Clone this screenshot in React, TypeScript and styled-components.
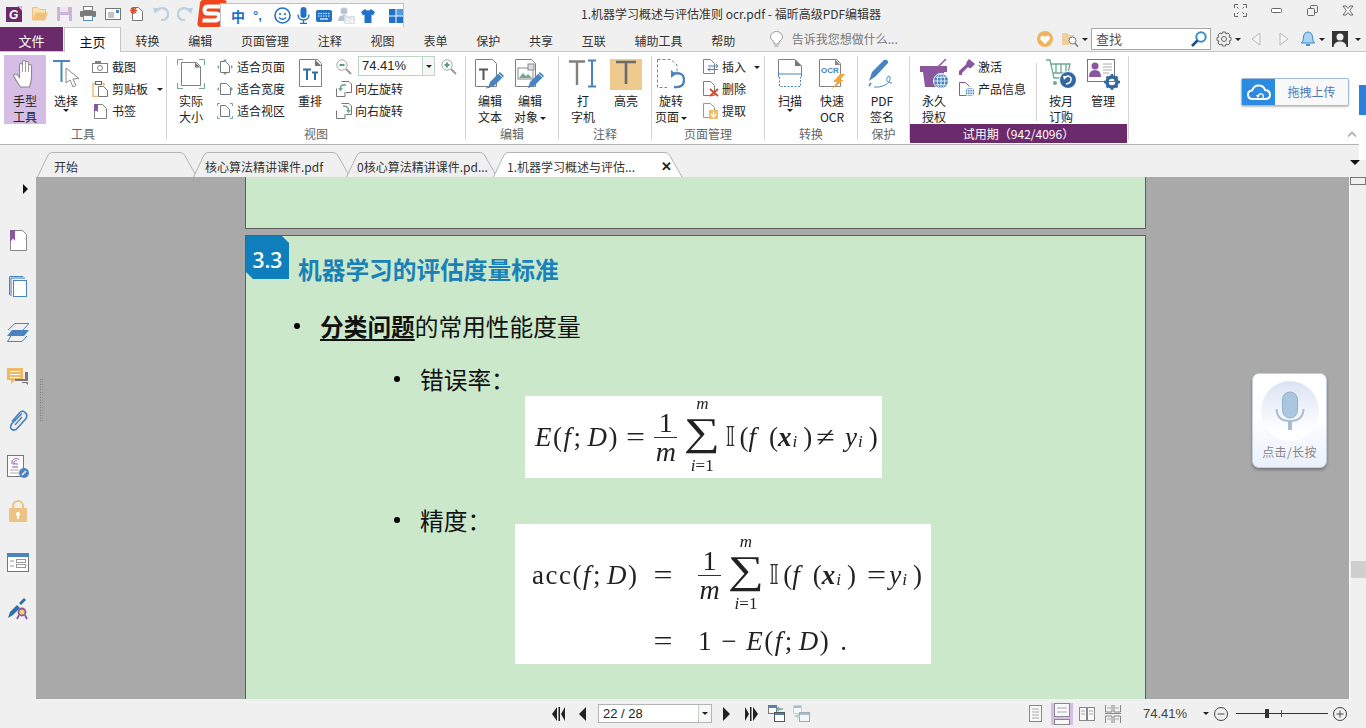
import React from 'react';
import styled, { createGlobalStyle } from 'styled-components';

const Global = createGlobalStyle`
  html, body { margin: 0; padding: 0; background: #f0f0f0; }
  * { box-sizing: border-box; }
`;
const CJK = `"Noto Sans CJK SC", "Liberation Sans", sans-serif`;
const Root = styled.div`
  position: relative; width: 1366px; height: 728px; overflow: hidden;
  background: #f0f0f0; font: 12px/16px ${CJK}; color: #222;
`;
const Ico = styled.svg`display: block; flex-shrink: 0;`;
const I = ({ w, h, children }: { w: number; h: number; children?: React.ReactNode }) => (
  <Ico width={w} height={h} viewBox={`0 0 ${w} ${h}`} fill="none">{children}</Ico>
);
const Caret = styled.span<{ $ml?: number; $c?: string }>`
  display: inline-block; flex-shrink: 0; width: 0; height: 0; vertical-align: middle;
  margin-left: ${p => p.$ml ?? 0}px;
  border-left: 3px solid transparent; border-right: 3px solid transparent;
  border-top: 3px solid ${p => p.$c ?? '#222'};
`;

/* ---------- title bar ---------- */
const TitleBar = styled.div`display: flex; align-items: center; height: 27px; padding: 0 12px 0 6px;`;
const Quick = styled.div`display: flex; align-items: center; gap: 8.5px;`;
const LogoSlot = styled.div`width: 17.5px; flex-shrink: 0;`;
const SogouWrap = styled.div`display: flex; align-items: flex-start; height: 27px; margin-left: 4px;`;
const SogouBar = styled.div`
  display: flex; align-items: center; width: 184px; height: 24px; margin: 3px 0 0 -7px; padding-left: 10px;
  background: #fff; border: 1px solid #b9c3cf; border-bottom: 0;
`;
const SogouZh = styled.span`font: 700 14px/16px ${CJK}; color: #1f72c7; width: 22px;`;
const SogouPunct = styled.span`font: 700 13px/14px "Liberation Sans", sans-serif; color: #1f72c7; width: 21px;`;
const SogouItems = styled.div`display: flex; align-items: center; gap: 6px;`;
const Title = styled.div`margin-left: 177px; white-space: nowrap; color: #333;`;
const WinButtons = styled.div`display: flex; align-items: center; gap: 24.5px; margin-left: auto; margin-top: -6px;`;

/* ---------- menu ---------- */
const MenuBar = styled.div`display: flex; height: 24px; position: relative;`;
const FileTab = styled.div`
  width: 63px; height: 24px; background: #6b2a6b; color: #fff; text-align: center; line-height: 27px; font-size: 13px;
`;
const MenuTab = styled.div<{ $active?: boolean }>`
  height: ${p => (p.$active ? 25 : 24)}px; line-height: 27px; padding: 0 14.4px; white-space: nowrap; color: #333;
  ${p => p.$active && `
    width: 57px; margin-left: 1px; padding: 0; text-align: center; font-size: 13px; color: #111; background: #fff;
    border: 1px solid #c4c4c4; border-bottom: 0; position: relative; z-index: 2;
  `}
`;
const Hint = styled.div`display: flex; align-items: center; gap: 9px; margin-left: 20px; color: #777; height: 24px;`;
const RightTools = styled.div`display: flex; align-items: center; margin-left: auto; padding-right: 5px; height: 24px;`;
const SearchBox = styled.div`
  display: flex; align-items: center; justify-content: space-between; width: 120px; height: 22px; margin-left: 3px; padding: 0 2px 0 4px;
  background: #fff; border: 1px solid #a8a8a8; font-size: 13px; color: #555;
`;
const Spacer = styled.span<{ $w: number }>`display: block; flex-shrink: 0; width: ${p => p.$w}px;`;

/* ---------- ribbon ---------- */
const Ribbon = styled.div`
  display: flex; height: 94px; background: #fff; border-top: 1px solid #c8c8c8; border-bottom: 1px solid #b4b4b4; position: relative;
`;
const Group = styled.div<{ $w: number; $pl?: number }>`
  width: ${p => p.$w}px; height: 84px; margin-top: 4px; padding-left: ${p => p.$pl ?? 0}px;
  border-right: 1px solid #d4d4d4; flex-shrink: 0; position: relative;
`;
const Body = styled.div`display: flex; height: 68px; align-items: flex-start;`;
const GroupLabel = styled.div`
  position: absolute; left: 0; right: 0; top: 68px; height: 16px; line-height: 20px; text-align: center; color: #666;
`;
const BigBtn = styled.div<{ $w?: number; $ml?: number; $active?: boolean }>`
  display: flex; flex-direction: column; align-items: center; flex-shrink: 0;
  width: ${p => p.$w ?? 40}px; height: 69px; margin-top: -1px; margin-left: ${p => p.$ml ?? 0}px; padding-top: 4px;
  background: ${p => (p.$active ? '#d5bde6' : 'transparent')}; white-space: nowrap;
`;
const IconSlot = styled.div`
  display: flex; justify-content: center; align-items: flex-start; height: 34px; width: 100%; flex-shrink: 0;
`;
const HiSlot = styled.div`
  display: flex; justify-content: center; width: 32px; height: 31px; margin-bottom: 3px; background: #eeca8e; flex-shrink: 0;
`;
const SmallCol = styled.div<{ $ml?: number }>`display: flex; flex-direction: column; margin-left: ${p => p.$ml ?? 0}px; flex-shrink: 0;`;
const SmallRow = styled.div<{ $gap?: number }>`
  display: flex; align-items: center; height: 22px; gap: ${p => p.$gap ?? 3}px; white-space: nowrap; color: #222;
`;
const BookSlot = styled.div`width: 16px; padding-left: 2px; flex-shrink: 0;`;
const ZoomInput = styled.div`
  display: flex; align-items: center; justify-content: space-between; width: 77px; height: 20px; margin-top: -2px;
  background: #fff; border: 1px solid #bcd6c6; border-right: 0; padding-left: 3px; font: 13px/18px "Liberation Sans", sans-serif; color: #222;
`;
const ZoomDrop = styled.span`
  display: flex; align-items: center; justify-content: center; width: 13px; height: 18px; border-left: 1px solid #bcd6c6; border-right: 1px solid #bcd6c6; background: #f6f6f6;
`;
const InnerSep = styled.div`width: 1px; height: 58px; margin: 7px 0 0 10px; background: #d4d4d4; flex-shrink: 0;`;
const TrialBar = styled.div`
  position: absolute; left: 0; top: 68px; width: 217px; height: 19px; background: #6b2a6b; color: #fff; text-align: center; line-height: 19px;
`;
const UploadArea = styled.div`flex: 1; padding: 26px 0 0 112px;`;
const UploadBtn = styled.div`
  display: flex; width: 108px; height: 28px; background: #f8f8f8; border: 1px solid #a3bedc; border-radius: 2px; box-shadow: 0 1px 2px rgba(0,0,0,.25);
`;
const UploadIcon = styled.div`display: flex; align-items: center; justify-content: center; width: 33px; background: #2b8be0;`;
const UploadText = styled.div`flex: 1; text-align: center; line-height: 26px; color: #4d78b8;`;
const Collapse = styled.div`position: absolute; left: 1347px; top: 79px;`;
const SidePanel = styled.div`
  position: absolute; left: 1359px; top: 85px; width: 7px; height: 75px; background: #fff; z-index: 3;
  &::before { content: ''; display: block; height: 30px; background: #2b7fdc; }
`;

/* ---------- doc tabs ---------- */
const TabsRow = styled.div`display: flex; align-items: flex-end; height: 32px; padding-left: 37px;`;
const DocTab = styled.div<{ $w: number; $active?: boolean }>`
  position: relative; width: ${p => p.$w}px; height: 25px; margin-right: -7px; flex-shrink: 0; z-index: ${p => (p.$active ? 2 : 1)};
`;
const TabShape = styled.svg`position: absolute; inset: 0;`;
const TabText = styled.div<{ $pl: number }>`
  position: relative; padding-left: ${p => p.$pl}px; line-height: 30px; white-space: nowrap; color: #333;
`;
const TabClose = styled.span`position: absolute; right: 13px; top: 7px; font: 700 13px/16px "Liberation Sans", sans-serif; color: #222;`;
const TabsEnd = styled.div`margin-left: auto; margin-right: 6px; margin-bottom: 12px;`;
const BigCaret = styled.span`
  display: block; width: 0; height: 0; border-left: 5px solid transparent; border-right: 5px solid transparent; border-top: 5px solid #111;
`;

/* ---------- main ---------- */
const Main = styled.div`display: flex; height: 522px;`;
const Sidebar = styled.div`display: flex; flex-direction: column; align-items: center; width: 36px; flex-shrink: 0; position: relative;`;
const SideToggle = styled.span`
  position: absolute; left: 23px; top: 7px; width: 0; height: 0;
  border-top: 5px solid transparent; border-bottom: 5px solid transparent; border-left: 5px solid #111;
`;
const SideItem = styled.div<{ $mt: number }>`margin-top: ${p => p.$mt}px;`;
const Canvas = styled.div`
  position: relative; width: 1313px; flex-shrink: 0; overflow: hidden; background: #a9a9a9; padding-left: 209px;
`;
const Gripper = styled.div`
  position: absolute; left: 3px; top: 201px; width: 4px; height: 44px;
  background-image: radial-gradient(#666 0.7px, transparent 0.8px); background-size: 2.6px 2.6px;
`;
const PageTop = styled.div`
  width: 901px; height: 52px; background: #cbe8cb; border: 1px solid #5d5d5d; border-top: 0;
`;
const Page = styled.div`
  width: 901px; height: 520px; margin-top: 6px; background: #cbe8cb; border: 1px solid #5d5d5d; border-bottom: 0;
  display: flex; flex-direction: column; color: #111;
`;
const PageHead = styled.div`display: flex; align-items: flex-start; height: 47px;`;
const Badge = styled.div`
  width: 43px; height: 43px; background: #0e7fbc; color: #fff; text-align: center;
  font: 600 21px/49px "Open Sans", "Liberation Sans", sans-serif;
  clip-path: polygon(0 0, 36px 0, 43px 7px, 43px 43px, 7px 43px, 0 36px);
`;
const Heading = styled.div`margin: 18px 0 0 9px; font: 700 23.7px/30px ${CJK}; color: #1a80b8;`;
const Bullet = styled.div<{ $indent: number; $mt: number }>`
  display: flex; align-items: center; height: 30px; padding-left: ${p => p.$indent}px; margin-top: ${p => p.$mt}px;
  font: 23.7px/30px ${CJK}; color: #111; white-space: nowrap;
`;
const Dot = styled.span`width: 6px; height: 6px; border-radius: 50%; background: #000; margin-right: 20px; flex-shrink: 0;`;
const Strong = styled.span`font-weight: 700; text-decoration: underline; text-underline-offset: 3px;`;
const Formula = styled.div<{ $ml: number; $mt: number; $w: number; $h: number }>`
  position: relative; width: ${p => p.$w}px; height: ${p => p.$h}px; margin-left: ${p => p.$ml}px; margin-top: ${p => p.$mt}px;
  background: #fff; flex-shrink: 0; color: #222; font: italic 27px/30px "Liberation Serif", serif;
`;
const MathLine = styled.div<{ $pl?: number }>`
  display: flex; align-items: center; height: 100%; padding-left: ${p => p.$pl ?? 0}px; white-space: nowrap; filter: blur(.3px);
`;
const MathGrid = styled.div`
  display: grid; grid-template-columns: 123px 43px auto; grid-template-rows: 98px 34px; align-items: center; padding: 2px 0 0 17px;
  filter: blur(.3px);
`;
const Spread = styled.span`letter-spacing: 1.5px; white-space: nowrap;`;
const Up = styled.span`font-style: normal;`;
const BoldX = styled.b`font-style: italic; font-weight: 700;`;
const Sub = styled.span`font-size: 17px; line-height: 0; margin: 9px 6px 0 1px;`;
const Sym = styled.span<{ $m?: string }>`font-style: normal; margin: ${p => p.$m ?? '0'};`;
const Wide = styled.span`font-style: normal; display: inline-block; transform: scaleX(1.25); margin: 0 3px;`;
const Frac = styled.span`
  display: inline-flex; flex-direction: column; align-items: center; width: 23px; line-height: 27px; font-size: 28px;
  & > :first-child { font-style: normal; border-bottom: 1px solid #333; width: 100%; text-align: center; padding-bottom: 1px; }
`;
const Sum = styled.span`display: inline-flex; flex-direction: column; align-items: center; width: 34px; margin: -4px 6px 0 8px;`;
const SumLimit = styled.span`font-size: 17px; line-height: 14px;`;
const SumSign = styled.span`
  display: block; height: 48px; font: 39px/48px "Liberation Serif", serif; font-style: normal;
  transform: translateY(-3px) scaleX(1.3);
`;
const DoubleI = styled.span`font: 26px/28px "DejaVu Sans", sans-serif; font-style: normal; margin-right: 4px; color: #333;`;

const Scroll = styled.div`width: 17px; flex-shrink: 0; display: flex; flex-direction: column; align-items: center; border-left: 1px solid #fafafa;`;
const ScrollUp = styled.div`width: 16px; height: 8px; border: 1px solid #777; background: #f0f0f0;`;
const ScrollThumb = styled.div`width: 15px; height: 17px; margin-top: 376px; background: #cfcfcf;`;
const Voice = styled.div`
  position: absolute; left: 1216px; top: 196px; width: 75px; height: 95px; border-radius: 7px; border: 1px solid #c4cfe0;
  background: linear-gradient(#fff 0%, #fff 45%, #eaf0fb 100%); box-shadow: 0 2px 3px rgba(0,0,0,.3);
  display: flex; flex-direction: column; align-items: center; padding-top: 7px;
`;
const VoiceCircle = styled.div`
  display: flex; align-items: center; justify-content: center; width: 58px; height: 60px; border-radius: 50%;
  background: linear-gradient(#dbe4f4, #ffffff 85%);
`;
const VoiceText = styled.div`margin-top: 3px; font-size: 12px; letter-spacing: .4px; color: #888; white-space: nowrap;`;

/* ---------- status ---------- */
const Status = styled.div`display: flex; align-items: center; height: 29px; padding: 0 19px 0 552px;`;
const PageBox = styled.div`
  display: flex; align-items: center; justify-content: space-between; width: 114px; height: 19px; margin: 0 9px 0 10px;
  background: #fff; border: 1px solid #b4b4b4; padding-left: 4px; font: 13px/17px "Liberation Sans", sans-serif; color: #222;
`;
const PageDrop = styled.span`display: flex; align-items: center; justify-content: center; width: 13px; height: 17px; border-left: 1px solid #bcd6c6; background: #f6f6f6;`;
const StatusRight = styled.div`display: flex; align-items: center; margin-left: auto;`;
const ViewBtn = styled.div<{ $on?: boolean; $ml?: number; $w?: number }>`
  display: flex; align-items: center; justify-content: center; width: ${p => p.$w ?? 22}px; height: 22px; margin-left: ${p => p.$ml ?? 0}px;
  background: ${p => (p.$on ? '#d5bde6' : 'transparent')};
`;
const ZoomPct = styled.span`margin-left: 19px; width: 60px; font: 13px/16px "Liberation Sans", sans-serif; color: #444;`;
const Slider = styled.div`position: relative; width: 92px; height: 1px; margin: 0 5px 0 8px; background: #333;`;
const SliderThumb = styled.span`position: absolute; left: 29px; top: -4px; width: 4px; height: 9px; background: #333;`;
const SliderTick = styled.span`position: absolute; left: 45px; top: -3px; width: 1px; height: 7px; background: #555;`;

/* ---------- icons ---------- */
const B = '#4a83bd', G = '#808080', P = '#8a569e', O = '#eeb96b', T = '#6fa896';
const Doc = ({ x = 0, y = 0, w = 13, h = 15, s = G, f = '#fff' }: any) => (
  <path d={`M${x + .5} ${y + .5}H${x + w - 4.5}L${x + w - .5} ${y + 4.5}V${y + h - .5}H${x + .5}Z`} fill={f} stroke={s} />
);
const Pen = ({ x = 0, y = 0, c = B }: any) => (
  <g transform={`translate(${x} ${y})`}>
    <path d="M0 16 L2 10 L12 0 L16 4 L6 14 Z" fill={c} /><path d="M10.5 1.5 L14.5 5.5" stroke="#fff" />
  </g>
);
const Globe = ({ cx, cy, r, c = B }: any) => (
  <g>
    <circle cx={cx} cy={cy} r={r} fill={c} stroke="#fff" />
    <path d={`M${cx - r} ${cy}H${cx + r}M${cx} ${cy - r}V${cy + r}M${cx - r * .7} ${cy - r * .5}H${cx + r * .7}M${cx - r * .7} ${cy + r * .5}H${cx + r * .7}`} stroke="#fff" strokeWidth=".8" />
    <ellipse cx={cx} cy={cy} rx={r * .5} ry={r} stroke="#fff" strokeWidth=".8" />
  </g>
);
const LogoIcon = () => (
  <I w={16} h={16}>
    <rect y="1" width="16" height="15" fill="#6b2a6b" /><path d="M12 0h3l1 2v3z" fill="#fff" stroke="#6b2a6b" strokeWidth=".5" />
    <text x="3" y="13" fontFamily="Liberation Sans" fontWeight="700" fontStyle="italic" fontSize="12" fill="#fff">G</text>
  </I>
);
const OpenIcon = () => (
  <I w={16} h={15}>
    <path d="M.5 14V1.5h5l2 2h6V7" fill="#f8e2b8" stroke="#ecc07e" />
    <path d="M.5 14.5L3.5 6.5H16L13 14.5Z" fill="#f0c27b" />
  </I>
);
const SaveIcon = () => (
  <I w={15} h={14}>
    <rect width="15" height="14" fill="#ccb4d6" /><rect x="3" width="8" height="5" fill="#ede4f1" />
    <rect x="3" y="8" width="9" height="6" fill="#f3edf5" />
  </I>
);
const PrintIcon = () => (
  <I w={16} h={15}>
    <rect x="3.5" y=".5" width="9" height="4" fill="#fff" stroke={G} /><rect y="5" width="16" height="6" rx="1" fill="#7a7a7a" />
    <rect x="3.5" y="9.5" width="9" height="5" fill="#fff" stroke="#5a8fc0" />
  </I>
);
const MailIcon = () => (
  <I w={16} h={12}>
    <rect x=".5" y=".5" width="15" height="11" fill="#fff" stroke="#777" />
    <path d="M3 5h6M3 7h6M3 9h6" stroke="#888" /><rect x="11" y="2" width="3" height="3" fill="#4a83bd" />
  </I>
);
const NewIcon = () => (
  <I w={15} h={15}>
    <Doc x={3} y={1} w={11} h={14} s="#777" />
    <path d="M4.5 1V8M1 4.5H8M2 2l5 5M7 2l-5 5" stroke="#e5492a" strokeWidth="1.3" />
  </I>
);
const UndoIcon = ({ flip }: { flip?: boolean }) => (
  <I w={16} h={15}>
    <g transform={flip ? 'translate(16 0) scale(-1 1)' : undefined}>
      <path d="M4 5 A6 6 0 1 1 8 14" stroke="#bcd0e0" strokeWidth="2.4" />
      <path d="M0 2 L7 2 L2 8Z" fill="#bcd0e0" />
    </g>
  </I>
);
const SogouS = () => (
  <I w={30} h={27}>
    <path d="M6 0H27Q30 0 29.5 3L25 24Q24.500 27 21 27H4Q0 27 0.500 23L3 3Q3.500 0 6 0Z" fill="#f0461e" />
    <path d="M23 6.500H11Q7.500 6.500 7.500 10 Q7.500 13.500 11 13.500H19Q22.500 13.500 22 17 Q21.500 20.500 18 20.500H5.500" stroke="#fff" strokeWidth="4" />
  </I>
);
const SgSmile = () => (
  <I w={17} h={17}>
    <circle cx="8.500" cy="8.500" r="7.500" stroke="#1f72c7" strokeWidth="1.600" />
    <circle cx="6" cy="7" r="1.100" fill="#1f72c7" /><circle cx="11" cy="7" r="1.100" fill="#1f72c7" />
    <path d="M5 10.500Q8.500 14 12 10.500" stroke="#1f72c7" strokeWidth="1.300" />
  </I>
);
const SgMic = () => (
  <I w={13} h={17}>
    <rect x="3.500" width="6" height="11" rx="3" fill="#1f72c7" />
    <path d="M1 7.500Q1 13 6.500 13T12 7.500M6.500 13V16M3 16.500H10" stroke="#1f72c7" strokeWidth="1.300" />
  </I>
);
const SgKeys = () => (
  <I w={16} h={12}>
    <rect width="16" height="12" rx="2" fill="#1f72c7" />
    <path d="M2 3.500H14M2 6H14" stroke="#fff" strokeDasharray="1.500 1" /><path d="M4 9H12" stroke="#fff" strokeWidth="1.200" />
  </I>
);
const SgUser = () => (
  <I w={17} h={17}>
    <circle cx="6" cy="4" r="3.500" fill="#b7c6d2" /><path d="M0 14Q0 8 6 8T12 14Z" fill="#b7c6d2" />
    <rect x="6" y="9" width="11" height="8" rx="1" fill="#dbe2e8" />
    <text x="7.500" y="16" fontFamily="Liberation Sans" fontSize="7" fontWeight="700" fill="#fff">24</text>
  </I>
);
const SgShirt = () => (
  <I w={14} h={14}><path d="M4 0L0 3L2 6.500L3.500 5.500V14H10.500V5.500L12 6.500L14 3L10 0Q7 3 4 0Z" fill="#1f72c7" /></I>
);
const SgGrid = () => (
  <I w={14} h={14}>
    <rect width="6.500" height="6.500" fill="#1f72c7" /><rect x="7.500" width="6.500" height="6.500" fill="#4f9ae0" />
    <rect y="7.500" width="6.500" height="6.500" fill="#1f72c7" /><rect x="7.500" y="7.500" width="6.500" height="6.500" fill="#1f72c7" />
  </I>
);
const WinFull = () => (
  <I w={13} h={13}><path d="M.5 4V.5H4M9 .5H12.500V4M12.500 9V12.500H9M4 12.500H.5V9M3 3l1.500 1.500M10 3L8.500 4.500M10 10L8.500 8.500M3 10l1.500-1.500" stroke="#666" /></I>
);
const WinMin = () => (<I w={11} h={13}><rect x=".5" y="4.500" width="10" height="4" rx="1" fill="#fff" stroke="#666" /></I>);
const WinMax = () => (
  <I w={11} h={13}><rect x="3.500" y="1.500" width="7" height="7" rx="1" stroke="#666" /><rect x=".5" y="4.500" width="7" height="7" rx="1" fill="#f0f0f0" stroke="#666" /></I>
);
const WinClose = () => (
  <I w={12} h={13}><path d="M1 2H4L6 4.500L8 2H11L7.700 6.500L11 11H8L6 8.500L4 11H1L4.300 6.500Z" fill="#fff" stroke="#666" /></I>
);
const Bulb = () => (
  <I w={13} h={16}>
    <path d="M4 11Q.5 8.500.5 6A6 5.500 0 0 1 12.500 6Q12.500 8.500 9 11V13H4Z" stroke="#999" fill="#fff" /><path d="M4.500 15H8.500" stroke="#999" />
  </I>
);
const Heart = () => (
  <I w={16} h={16}>
    <circle cx="8" cy="8" r="8" fill="#eeb45e" />
    <path d="M8 13L3.500 8.500Q2.500 5.500 5 4.800Q7 4.500 8 6.200Q9 4.500 11 4.800Q13.500 5.500 12.500 8.500Z" fill="#fff" />
  </I>
);
const FolderFind = () => (
  <I w={17} h={16}>
    <path d="M0 14V2H5L7 4H12V7H7V14Z" fill="#f0cf9e" />
    <circle cx="10.500" cy="9.500" r="3.500" stroke="#777" fill="#fff" /><path d="M13 12.500L16 15.500" stroke="#777" strokeWidth="1.600" />
  </I>
);
const SearchGlass = () => (
  <I w={18} h={17}>
    <circle cx="11" cy="6" r="4.700" stroke="#3a8fc8" strokeWidth="2" fill="#fff" /><path d="M7.500 9.500L2 15" stroke="#1f4f86" strokeWidth="2.600" />
  </I>
);
const Gear = () => (
  <I w={16} h={16}>
    <circle cx="8" cy="8" r="2.500" stroke="#666" />
    <path d="M6.500 1H9.500L10 3L12 2L14 4L13 6L15 6.500V9.500L13 10L14 12L12 14L10 13L9.500 15H6.500L6 13L4 14L2 12L3 10L1 9.500V6.500L3 6L2 4L4 2L6 3Z" stroke="#666" />
  </I>
);
const NavTri = ({ flip }: { flip?: boolean }) => (
  <I w={10} h={14}><path d={flip ? 'M1 1L9 7L1 13Z' : 'M9 1L1 7L9 13Z'} stroke="#bbb" fill="#f4f4f4" /></I>
);
const Bell = () => (
  <I w={14} h={16}>
    <path d="M.5 12Q2.500 10.500 2.500 6A4.500 5 0 0 1 11.500 6Q11.500 10.500 13.500 12Z" fill="#a9d4f5" stroke="#3b87c8" />
    <path d="M5 14H9" stroke="#3b87c8" strokeWidth="1.800" />
  </I>
);
const Avatar = () => (
  <I w={16} h={16}>
    <rect width="16" height="16" fill="#333" /><circle cx="8" cy="6" r="3.500" fill="#eee" /><path d="M1.500 16Q2 10.500 8 10.500T14.500 16Z" fill="#eee" />
  </I>
);
const HandIcon = () => (
  <I w={24} h={29}>
    <path d="M7.500 28C5 24 2.500 21 1 17.500C.2 15.500 2.500 14 4.500 16L6.500 18.500V6C6.500 4 9.500 4 9.500 6V3C9.500 1 12.500 1 12.500 3V3.500C12.500 2 15.500 2 15.500 4V6.500C15.500 5 18.500 5 18.500 7V18C18.500 22 17.500 25 16.500 28Z" fill="#fff" stroke="#8a8a8a" strokeWidth="1.100" />
    <path d="M9.500 6V13M12.500 3V13M15.500 4V13" stroke="#9a9a9a" />
  </I>
);
const SelectIcon = () => (
  <I w={27} h={29}>
    <path d="M0 2H17M8.500 2V23" stroke={B} strokeWidth="2" />
    <path d="M13 9V24L17 21L20 28L23 26.500L20 20L26 19.500Z" fill="#fff" stroke="#8a8a8a" />
  </I>
);
const CamIcon = () => (
  <I w={16} h={12}><rect x=".5" y="2.500" width="15" height="9" fill="#fff" stroke={G} /><rect x="3" y="0" width="6" height="3" fill={G} /><circle cx="8" cy="7" r="2.500" stroke={G} /></I>
);
const ClipIcon = () => (
  <I w={16} h={16}>
    <path d="M4.500 2.500H1V15.500H6" stroke={O} strokeWidth="1.400" /><path d="M9 2.500H12V5" stroke={O} strokeWidth="1.400" />
    <rect x="3.500" y=".5" width="6" height="3" stroke="#666" /><Doc x={6} y={5} w={10} h={11} s="#777" />
  </I>
);
const BookIcon = () => (
  <I w={13} h={15}><Doc s={G} /><path d="M0 0H4V8L2 6.500L0 8Z" fill={P} /></I>
);
const ActualIcon = () => (
  <I w={28} h={30}>
    <path d="M.5 6V.5H6M22 .5H27.500V6M27.500 24V29.500H22M6 29.500H.5V24" stroke={T} />
    <Doc x={4} y={3} w={20} h={24} s={G} f="#fff" />
    <path d="M18 3.500L23.500 8.500H18Z" fill="#777" />
  </I>
);
const FitPage = () => (
  <I w={16} h={16}>
    <Doc x={3} y={2} w={10} h={12} s="#777" />
    <path d="M8 0L6 2H10ZM8 16L6 14H10ZM0 8L2 6V10ZM16 8L14 6V10Z" fill={T} />
  </I>
);
const FitWidth = () => (
  <I w={16} h={14}><Doc x={3} y={1} w={11} h={12} s="#777" /><path d="M0 7L2 5V9ZM16 7L14 5V9Z" fill={T} /></I>
);
const FitView = () => (
  <I w={16} h={16}>
    <Doc x={3} y={2} w={10} h={12} s="#777" />
    <path d="M.5 3V.5H3M13 .5H15.500V3M15.500 13V15.500H13M3 15.500H.5V13" stroke={T} />
  </I>
);
const ReflowIcon = () => (
  <I w={23} h={28}>
    <Doc w={23} h={28} s={G} /><path d="M16 .5L22.500 7H16Z" fill="#777" />
    <path d="M4 10.500H12M8 10.500V21M13 13.500H19M16 13.500V21" stroke="#2f6ea6" strokeWidth="2" />
  </I>
);
const ZoomOut = () => (
  <I w={16} h={16}><circle cx="6" cy="6" r="5.200" fill="#fff" stroke="#aaa" /><path d="M3.500 6H8.500" stroke="#5b9a84" strokeWidth="2" /><path d="M10 10L15 15" stroke="#999" strokeWidth="2" /></I>
);
const ZoomIn = () => (
  <I w={16} h={16}><circle cx="6" cy="6" r="5.200" fill="#fff" stroke="#aaa" /><path d="M3.500 6H8.500M6 3.500V8.500" stroke="#5b9a84" strokeWidth="2" /><path d="M10 10L15 15" stroke="#999" strokeWidth="2" /></I>
);
const RotL = ({ flip }: { flip?: boolean }) => (
  <I w={16} h={16}>
    <path d="M5.500 .5H13L15.500 3V11.500H10M.5 7.500V15.500H9V11" stroke="#777" fill="#fff" />
    <path d={flip ? 'M7 3Q13 3 12.500 8' : 'M10 4Q4 3 4.500 8'} stroke={T} strokeWidth="1.600" />
    <path d={flip ? 'M10 7H15L12.500 10.500Z' : 'M2 7H7L4.500 10.500Z'} fill={T} />
  </I>
);
const EditText = () => (
  <I w={31} h={31}>
    <Doc w={22} h={28} s={G} /><path d="M4 10.500H13M8.500 10.500V21" stroke="#555" strokeWidth="2" /><Pen x={13} y={13} /><path d="M11 29L15 28" stroke={B} />
  </I>
);
const EditObj = () => (
  <I w={30} h={31}>
    <Doc w={21} h={28} s={G} /><rect x="3" y="9" width="15" height="11" fill="#fff" stroke="#888" />
    <path d="M4 19L8 14L11 17L13 15L17 19Z" fill="#6fa896" /><rect x="13" y="5" width="6" height="6" fill="#ddd" stroke="#888" />
    <Pen x={13} y={13} />
  </I>
);
const TypeIcon = () => (
  <I w={28} h={30}>
    <path d="M0 2.500H16M8 2.500V26" stroke={G} strokeWidth="2.400" />
    <path d="M19 1.500H27M19 27.500H27M23 1.500V27.500" stroke={B} strokeWidth="2" />
  </I>
);
const HiIcon = () => (<I w={24} h={28}><path d="M2 3H22M12 3V25" stroke="#6a6a6a" strokeWidth="2.600" /></I>);
const RotPage = () => (
  <I w={28} h={30}>
    <path d="M.5 .5H14L20 6V14M.5 .5V28.500H10" stroke={G} strokeDasharray="3 2" />
    <path d="M15 15Q27 12 27 21Q27 29 17 28" stroke={B} strokeWidth="2.400" /><path d="M14 11V19L19 15Z" fill={B} />
  </I>
);
const InsertI = () => (
  <I w={16} h={16}><Doc w={12} h={15} /><path d="M5 7H15M5 10.500H15" stroke={B} strokeWidth="1.200" /><path d="M13 5L15 7L13 9M7 8.500L5 10.500L7 12.500" stroke={B} /></I>
);
const DeleteI = () => (
  <I w={16} h={16}><Doc w={12} h={15} /><path d="M7 8L15 15M15 8L7 15" stroke="#d9472b" strokeWidth="1.800" /></I>
);
const ExtractI = () => (
  <I w={16} h={16}><Doc w={12} h={15} s="#999" /><rect x="6" y="7" width="9" height="9" fill="#f2bc6b" /><path d="M10.500 8.500V13M8 11L10.500 14L13 11" stroke="#fff" strokeWidth="1.200" /></I>
);
const ScanIcon = () => (
  <I w={24} h={29}>
    <path d="M.5 13V.5H17L23.500 7V13" stroke={G} fill="#fff" /><path d="M17 .5L23.500 7H17Z" fill="#777" />
    <path d="M0 15H24M.5 12V18M23.500 12V18" stroke={B} /><path d="M1.500 18V27.500H22.500V18" stroke={B} strokeDasharray="2 1.500" />
  </I>
);
const OcrIcon = () => (
  <I w={26} h={30}>
    <Doc w={22} h={28} s={G} /><path d="M16 .5L21.500 6H16Z" fill="#888" />
    <text x="2" y="14" fontFamily="Liberation Sans" fontSize="8" fontWeight="700" fill={B}>OCR</text>
    <path d="M21 15H26L21 21H25L13 30L18 23H14Z" fill="#f0a63f" />
  </I>
);
const SignIcon = () => (
  <I w={28} h={30}>
    <path d="M1 22L4 13L16 1C18 0 21 2 20 4L8 17Z" fill={B} /><path d="M3 24L1 27" stroke={B} strokeWidth="1.500" />
    <path d="M6 28C12 29 24 25 22 18C20 14 15 24 24 24" stroke={B} />
  </I>
);
const BasketIcon = () => (
  <I w={29} h={30}>
    <path d="M15 11L26 0" stroke={P} strokeWidth="1.500" /><rect y="7" width="27" height="6" fill={P} /><path d="M3 13H24L22 28H5Z" fill={P} />
    <Globe cx={21} cy={22} r={7.500} />
  </I>
);
const KeyIcon = () => (
  <I w={16} h={16}>
    <path d="M10 0L16 5L12 9Q10 9.500 9 8L3 14L3 16H0V12L7 5.500Q7 3 10 0Z" fill={P} />
  </I>
);
const ProductI = () => (
  <I w={16} h={15}><Doc w={11} h={14} s={P} /><Globe cx={11} cy={10} r={4.800} /></I>
);
const CartIcon = () => (
  <I w={31} h={30}>
    <path d="M0 1H4L8 19H20M5 5H24L22 14H7M10 5V14M15 5V14M20 5V14" stroke={T} strokeWidth="1.300" />
    <circle cx="9" cy="24" r="2" fill={T} /><circle cx="18" cy="24" r="2" fill="#d9472b" />
    <circle cx="22" cy="21" r="8.500" fill="#33689e" stroke="#fff" /><path d="M19 19Q22 15 25 19Q26 24 20 25" stroke="#fff" strokeWidth="1.500" /><path d="M17 17L21 17L18 21Z" fill="#fff" />
  </I>
);
const ManageIcon = () => (
  <I w={33} h={31}>
    <rect x=".5" y=".5" width="27" height="22" fill="#fff" stroke="#777" />
    <circle cx="8" cy="7" r="3.500" fill={P} /><path d="M2 18Q2 11 8 11T14 18Z" fill={P} />
    <path d="M16 5H25M16 8H25M16 11H25M16 14H22" stroke="#aaa" />
    <circle cx="25" cy="23" r="5" stroke="#33689e" strokeWidth="3.500" />
    <path d="M25 15V18M25 28V31M17 23H20M30 23H33M19.500 17.500L21.500 19.500M28.500 26.500L30.500 28.500M30.500 17.500L28.500 19.500M19.500 28.500L21.500 26.500" stroke="#33689e" strokeWidth="2.400" />
  </I>
);
const Cloud = () => (
  <I w={24} h={17}>
    <path d="M6 15Q1 15 1 10.500Q1 7 5 6.500Q7 1 12.500 1.500Q17 2 18 6Q23 6.500 23 11Q23 15 18 15Z" stroke="#fff" strokeWidth="2" />
    <path d="M11 12Q12 9 15 10Q17 11 16 14" stroke="#fff" strokeWidth="1.300" /><path d="M9 11L13 11.500L10.500 14Z" fill="#fff" />
  </I>
);
const SideBook = () => (
  <I w={17} h={21}><Doc y={0} w={17} h={21} s="#888" /><path d="M0 0H5V11L3 8.500L0 12Z" fill={P} /></I>
);
const SidePages = () => (
  <I w={18} h={21}>
    <path d="M.5 19V.5H14" stroke={B} /><path d="M2 20V2H16" stroke={B} /><rect x="4.500" y="4.500" width="13" height="16" fill="#fff" stroke={B} />
  </I>
);
const SideLayers = () => (
  <I w={22} h={19}>
    <path d="M8 .5H22L14 9M.5 9.500" stroke={B} /><path d="M8 .5L1 7" stroke={B} />
    <path d="M5 7H22L17 13H0Z" fill={B} /><path d="M4 13L.5 18.500H15L20 13" stroke={B} />
  </I>
);
const SideComment = () => (
  <I w={22} h={21}>
    <path d="M0 0H16V12H8L4 16V12H0Z" fill="#f0b968" /><path d="M3 3.500H13M3 6.500H13M3 9.500H13" stroke="#fff" />
    <path d="M8 13H21V4H18V11H8ZM15 14H21V17L19 15H15Z" fill="#777" />
  </I>
);
const SideClip = () => (
  <I w={20} h={22}>
    <path d="M14 4L4 14Q1 18 4 20Q7 22 10 18L18 9Q20 5 17 3Q14 0 11 4L4 12" stroke={B} strokeWidth="1.700" transform="translate(0 -.5)" />
    <path d="M7 15L14 7" stroke={B} strokeWidth="1.300" />
  </I>
);
const SideSign = () => (
  <I w={22} h={23}>
    <rect x=".5" y=".5" width="16" height="21" fill="#fff" stroke="#777" />
    <path d="M5 9C4 3 11 2 12 5M7 10C6 6 9 5 10 6M5 12H11M7 8C8 9 9 9 11 9" stroke={P} />
    <path d="M3 15H12M3 18H12" stroke="#aaa" />
    <circle cx="17" cy="18" r="5" fill={B} /><path d="M15 20L19 16" stroke="#fff" strokeWidth="1.500" />
  </I>
);
const SideLock = () => (
  <I w={18} h={22}>
    <path d="M4 9V6A5 5 0 0 1 14 6V9" stroke="#ecc383" strokeWidth="2" /><rect y="8" width="18" height="14" rx="1" fill="#ecc383" />
    <circle cx="9" cy="14" r="2" fill="#fff" /><rect x="8" y="14" width="2" height="5" fill="#fff" />
  </I>
);
const SideForm = () => (
  <I w={22} h={19}>
    <rect x=".5" y=".5" width="21" height="18" fill="#fff" stroke="#777" /><rect width="22" height="4" fill={B} />
    <path d="M3 8H7M3 13H7" stroke="#999" /><rect x="9.500" y="6.500" width="9" height="3" stroke="#999" /><rect x="9.500" y="11.500" width="9" height="3" stroke="#999" />
  </I>
);
const SideCert = () => (
  <I w={22} h={23}>
    <path d="M1 21L3 15L10 8L13 11L6 18Z" fill="#2f6ea6" /><path d="M12 6L17 1L19 3L14 8Z" fill="#2f6ea6" />
    <circle cx="15" cy="15" r="3.500" fill="#f2d074" stroke={P} strokeWidth="1.800" /><path d="M12 18L10 22M18 18L20 22" stroke={P} strokeWidth="1.800" />
  </I>
);
const Mic = () => (
  <I w={30} h={40}>
    <rect x="7.500" y="1" width="15" height="26" rx="7.500" fill="#a9c8e0" stroke="#8fb0d0" />
    <path d="M1.500 18Q2 30 15 30T28.500 18" stroke="#a8bcd2" strokeWidth="2" /><rect x="13" y="30" width="4" height="9" fill="#a8bcd2" />
  </I>
);
const First = () => (<I w={13} h={14}><path d="M5 0V14L0 7ZM6.500 0H8V14H6.500ZM13 0V14L9 7Z" fill="#222" /></I>);
const Last = () => (<I w={13} h={14}><path d="M0 0V14L4 7ZM5 0H6.500V14H5ZM8 0V14L13 7Z" fill="#222" /></I>);
const Prev = () => (<I w={10} h={14}><path d="M8 0V14L1 7Z" fill="#222" /></I>);
const Next = () => (<I w={10} h={14}><path d="M2 0V14L9 7Z" fill="#222" /></I>);
const HistBack = ({ dim }: { dim?: boolean }) => (
  <I w={17} h={17}>
    <g opacity={dim ? .45 : 1}>
      <rect x=".5" y=".5" width="8" height="8" fill="#fff" stroke={dim ? '#aaa' : '#777'} /><rect x="1" y="1" width="7" height="2" fill={B} />
      <rect x="6.500" y="7.500" width="10" height="9" fill="#fff" stroke="#555" /><rect x="7" y="8" width="9" height="2" fill={B} />
      <path d={dim ? 'M1 11H6L4 9M6 11L4 13' : 'M15 4H9L11 2M9 4L11 6'} stroke={T} strokeWidth="1.300" />
    </g>
  </I>
);
const V1 = () => (<I w={13} h={17}><rect x=".5" y=".5" width="12" height="16" stroke="#888" fill="#f8f8f8" /><path d="M3 4H10M3 7H10M3 10H10M3 13H10" stroke="#aaa" /></I>);
const V2 = () => (<I w={16} h={22}><rect x=".5" y=".5" width="15" height="13" stroke="#888" fill="#f8f8f8" /><rect x=".5" y="16.500" width="15" height="5" stroke="#888" fill="#f8f8f8" /><path d="M3 5H13M3 9H13" stroke="#aaa" /></I>);
const V3 = () => (<I w={16} h={14}><rect x=".5" y=".5" width="7" height="13" stroke="#888" fill="#f8f8f8" /><rect x="8.500" y=".5" width="7" height="13" stroke="#888" fill="#f8f8f8" /><path d="M2 4H6M2 7H6M10 4H14M10 7H14" stroke="#aaa" /></I>);
const V4 = () => (<I w={16} h={18}><path d="M0 8.500H16M.5 0V7H7V0M9 0V7H15.500V0M.5 18V11H7V18M9 18V11H15.500V18" stroke="#888" /><path d="M2 3H6M10 3H14M2 14H6M10 14H14" stroke="#aaa" /></I>);
const CircleMinus = () => (<I w={14} h={14}><circle cx="7" cy="7" r="6.500" stroke="#444" /><path d="M3.500 7H10.500" stroke="#444" /></I>);
const CirclePlus = () => (<I w={14} h={14}><circle cx="7" cy="7" r="6.500" stroke="#444" /><path d="M3.500 7H10.500M7 3.500V10.500" stroke="#444" /></I>);

const tabPath = (w: number) => `M0.5 25 L11 3 Q12.500 .5 15 .5 H${w - 20} Q${w - 17} .5 ${w - 15.500} 3 L${w - 3} 25`;
const tabs = [
  { w: 163, pl: 17, t: '开始' },
  { w: 160, pl: 12, t: '核心算法精讲课件.pdf' },
  { w: 154, pl: 11, t: '0核心算法精讲课件.pd...' },
  { w: 192, pl: 14, t: '1.机器学习概述与评估...', active: true },
];
const menus = ['转换', '编辑', '页面管理', '注释', '视图', '表单', '保护', '共享', '互联', '辅助工具', '帮助'];

const Big = ({ icon, lines, w, ml, active }: { icon: React.ReactNode; lines: React.ReactNode[]; w?: number; ml?: number; active?: boolean }) => (
  <BigBtn $w={w} $ml={ml} $active={active}>
    <IconSlot>{icon}</IconSlot>
    {lines.map((l, i) => <div key={i}>{l}</div>)}
  </BigBtn>
);

const SumBlock = () => (
  <Sum><SumLimit>m</SumLimit><SumSign>∑</SumSign><SumLimit>i<Up>=1</Up></SumLimit></Sum>
);
const OneOverM = () => (<Frac><span>1</span><span>m</span></Frac>);

export default function App() {
  return (
    <Root>
      <Global />
      <TitleBar>
        <Quick>
          <LogoSlot><LogoIcon /></LogoSlot><OpenIcon /><SaveIcon /><PrintIcon /><MailIcon /><NewIcon /><UndoIcon /><UndoIcon flip />
        </Quick>
        <SogouWrap>
          <SogouS />
          <SogouBar>
            <SogouZh>中</SogouZh><SogouPunct>°,</SogouPunct>
            <SogouItems><SgSmile /><SgMic /><SgKeys /><SgUser /><SgShirt /><Spacer $w={2} /><SgGrid /></SogouItems>
          </SogouBar>
        </SogouWrap>
        <Title>1.机器学习概述与评估准则 ocr.pdf - 福昕高级PDF编辑器</Title>
        <WinButtons><WinFull /><WinMin /><WinMax /><WinClose /></WinButtons>
      </TitleBar>

      <MenuBar>
        <FileTab>文件</FileTab>
        <MenuTab $active>主页</MenuTab>
        {menus.map(m => <MenuTab key={m}>{m}</MenuTab>)}
        <Hint><Bulb />告诉我您想做什么...</Hint>
        <RightTools>
          <Heart /><Spacer $w={9} /><FolderFind /><Caret $ml={3} />
          <SearchBox>查找<SearchGlass /></SearchBox>
          <Spacer $w={5} /><Gear /><Caret $ml={3} />
          <Spacer $w={10} /><NavTri /><Spacer $w={18} /><NavTri flip />
          <Spacer $w={12} /><Bell /><Caret $ml={4} />
          <Spacer $w={7} /><Avatar /><Caret $ml={7} />
        </RightTools>
      </MenuBar>

      <Ribbon>
        <Group $w={167} $pl={4}>
          <Body>
            <Big w={42} active icon={<HandIcon />} lines={['手型', '工具']} />
            <BigBtn $w={40}>
              <IconSlot><SelectIcon /></IconSlot>
              <div>选择</div>
              <Caret $ml={0} />
            </BigBtn>
            <SmallCol $ml={6}>
              <SmallRow $gap={4}><CamIcon />截图</SmallRow>
              <SmallRow $gap={4}><ClipIcon />剪贴板<Caret $ml={5} /></SmallRow>
              <SmallRow $gap={4}><BookSlot><BookIcon /></BookSlot>书签</SmallRow>
            </SmallCol>
          </Body>
          <GroupLabel>工具</GroupLabel>
        </Group>

        <Group $w={299} $pl={6}>
          <Body>
            <Big w={36} icon={<ActualIcon />} lines={['实际', '大小']} />
            <SmallCol $ml={8}>
              <SmallRow $gap={4}><FitPage />适合页面</SmallRow>
              <SmallRow $gap={4}><FitWidth />适合宽度</SmallRow>
              <SmallRow $gap={4}><FitView />适合视区</SmallRow>
            </SmallCol>
            <Big ml={7} w={36} icon={<ReflowIcon />} lines={['重排']} />
            <SmallCol $ml={8}>
              <SmallRow $gap={6}>
                <ZoomOut />
                <ZoomInput>74.41%<ZoomDrop><Caret /></ZoomDrop></ZoomInput>
                <ZoomIn />
              </SmallRow>
              <SmallRow><RotL />向左旋转</SmallRow>
              <SmallRow><RotL flip />向右旋转</SmallRow>
            </SmallCol>
          </Body>
          <GroupLabel>视图</GroupLabel>
        </Group>

        <Group $w={93} $pl={4}>
          <Body>
            <Big icon={<EditText />} lines={['编辑', '文本']} />
            <Big icon={<EditObj />} lines={['编辑', <>对象<Caret $ml={2} /></>]} />
          </Body>
          <GroupLabel>编辑</GroupLabel>
        </Group>

        <Group $w={93} $pl={4}>
          <Body>
            <Big icon={<TypeIcon />} lines={['打', '字机']} />
            <BigBtn $w={32} $ml={7}><HiSlot><HiIcon /></HiSlot><div>高亮</div></BigBtn>
          </Body>
          <GroupLabel>注释</GroupLabel>
        </Group>

        <Group $w={113}>
          <Body>
            <Big w={38} icon={<RotPage />} lines={['旋转', <>页面<Caret $ml={2} /></>]} />
            <SmallCol $ml={13}>
              <SmallRow><InsertI />插入<Caret $ml={5} /></SmallRow>
              <SmallRow><DeleteI />删除</SmallRow>
              <SmallRow><ExtractI />提取</SmallRow>
            </SmallCol>
          </Body>
          <GroupLabel>页面管理</GroupLabel>
        </Group>

        <Group $w={93} $pl={5}>
          <Body>
            <BigBtn><IconSlot><ScanIcon /></IconSlot><div>扫描</div><Caret /></BigBtn>
            <Big ml={2} icon={<OcrIcon />} lines={['快速', 'OCR']} />
          </Body>
          <GroupLabel>转换</GroupLabel>
        </Group>

        <Group $w={52} $pl={4}>
          <Body><Big icon={<SignIcon />} lines={['PDF', '签名']} /></Body>
          <GroupLabel>保护</GroupLabel>
        </Group>

        <Group $w={219} $pl={4}>
          <Body>
            <Big icon={<BasketIcon />} lines={['永久', '授权']} />
            <SmallCol $ml={5}>
              <SmallRow><KeyIcon />激活</SmallRow>
              <SmallRow><ProductI />产品信息</SmallRow>
            </SmallCol>
            <InnerSep />
            <Big ml={4} icon={<CartIcon />} lines={['按月', '订购']} />
            <Big ml={2} icon={<ManageIcon />} lines={['管理']} />
          </Body>
          <TrialBar>试用期（942/4096）</TrialBar>
        </Group>

        <UploadArea>
          <UploadBtn>
            <UploadIcon><Cloud /></UploadIcon>
            <UploadText>拖拽上传</UploadText>
          </UploadBtn>
        </UploadArea>
        <Collapse>
          <I w={10} h={6}><path d="M1 5.500L5 1.500L9 5.500" stroke="#aaa" strokeWidth="1.600" /></I>
        </Collapse>
      </Ribbon>
      <SidePanel />

      <TabsRow>
        {tabs.map(t => (
          <DocTab key={t.t} $w={t.w} $active={t.active}>
            <TabShape width={t.w} height={25} viewBox={`0 0 ${t.w} 25`}>
              <path d={tabPath(t.w)} fill={t.active ? '#fff' : '#f0f0f0'} stroke="#b4b4b4" />
            </TabShape>
            <TabText $pl={t.pl}>{t.t}</TabText>
            {t.active && <TabClose>✕</TabClose>}
          </DocTab>
        ))}
        <TabsEnd><BigCaret /></TabsEnd>
      </TabsRow>

      <Main>
        <Sidebar>
          <SideToggle />
          <SideItem $mt={53}><SideBook /></SideItem>
          <SideItem $mt={25}><SidePages /></SideItem>
          <SideItem $mt={26}><SideLayers /></SideItem>
          <SideItem $mt={26}><SideComment /></SideItem>
          <SideItem $mt={21}><SideClip /></SideItem>
          <SideItem $mt={23}><SideSign /></SideItem>
          <SideItem $mt={22}><SideLock /></SideItem>
          <SideItem $mt={31}><SideForm /></SideItem>
          <SideItem $mt={25}><SideCert /></SideItem>
        </Sidebar>
        <Canvas>
          <Gripper />
          <PageTop />
          <Page>
            <PageHead>
              <Badge>3.3</Badge>
              <Heading>机器学习的评估度量标准</Heading>
            </PageHead>
            <Bullet $indent={48} $mt={28}><Dot /><span><Strong>分类问题</Strong>的常用性能度量</span></Bullet>
            <Bullet $indent={148} $mt={23}><Dot />错误率：</Bullet>
            <Formula $ml={279} $mt={2} $w={357} $h={82}>
              <MathLine $pl={10}>
                <Spread>E<Up>(</Up>f<Sym $m="0 5px 0 1px">;</Sym>D<Up>)</Up></Spread>
                <Spacer $w={6} />
                <Wide>=</Wide>
                <Spacer $w={8} />
                <OneOverM />
                <SumBlock />
                <DoubleI>𝕀</DoubleI>
                <Sym>(</Sym><span>f</span><Sym $m="0 0 0 13px">(</Sym><BoldX>x</BoldX><Sub>i</Sub><Sym>)</Sym>
                <Spacer $w={3} />
                <Wide>≠</Wide>
                <Spacer $w={9} />
                <span>y</span><Sub>i</Sub><Sym>)</Sym>
              </MathLine>
            </Formula>
            <Bullet $indent={148} $mt={27}><Dot />精度：</Bullet>
            <Formula $ml={269} $mt={-11} $w={416} $h={140}>
              <MathGrid>
                <Spread><Up>acc(</Up>f<Sym $m="0 5px 0 1px">;</Sym>D<Up>)</Up></Spread>
                <Wide>=</Wide>
                <MathLine>
                  <OneOverM />
                  <SumBlock />
                  <DoubleI>𝕀</DoubleI>
                  <Sym>(</Sym><span>f</span><Sym $m="0 0 0 13px">(</Sym><BoldX>x</BoldX><Sub>i</Sub><Sym>)</Sym>
                  <Spacer $w={10} />
                  <Wide>=</Wide>
                  <Spacer $w={2} />
                  <span>y</span><Sub>i</Sub><Sym>)</Sym>
                </MathLine>
                <span />
                <Wide>=</Wide>
                <Spread><Up>1 − </Up>E<Up>(</Up>f<Sym $m="0 5px 0 1px">;</Sym>D<Up>)</Up><Sym $m="0 0 0 10px">.</Sym></Spread>
              </MathGrid>
            </Formula>
          </Page>
          <Voice>
            <VoiceCircle><Mic /></VoiceCircle>
            <VoiceText>点击/长按</VoiceText>
          </Voice>
        </Canvas>
        <Scroll>
          <ScrollUp />
          <ScrollThumb />
        </Scroll>
      </Main>

      <Status>
        <First /><Spacer $w={13} /><Prev />
        <PageBox>22 / 28<PageDrop><Caret /></PageDrop></PageBox>
        <Next /><Spacer $w={14} /><Last /><Spacer $w={10} /><HistBack /><Spacer $w={8} /><HistBack dim />
        <StatusRight>
          <ViewBtn $w={13}><V1 /></ViewBtn>
          <ViewBtn $on $ml={9}><V2 /></ViewBtn>
          <ViewBtn $ml={3} $w={22}><V3 /></ViewBtn>
          <ViewBtn $ml={4}><V4 /></ViewBtn>
          <ZoomPct>74.41%</ZoomPct>
          <Caret />
          <Spacer $w={5} />
          <CircleMinus />
          <Slider><SliderThumb /><SliderTick /></Slider>
          <CirclePlus />
        </StatusRight>
      </Status>
    </Root>
  );
}
